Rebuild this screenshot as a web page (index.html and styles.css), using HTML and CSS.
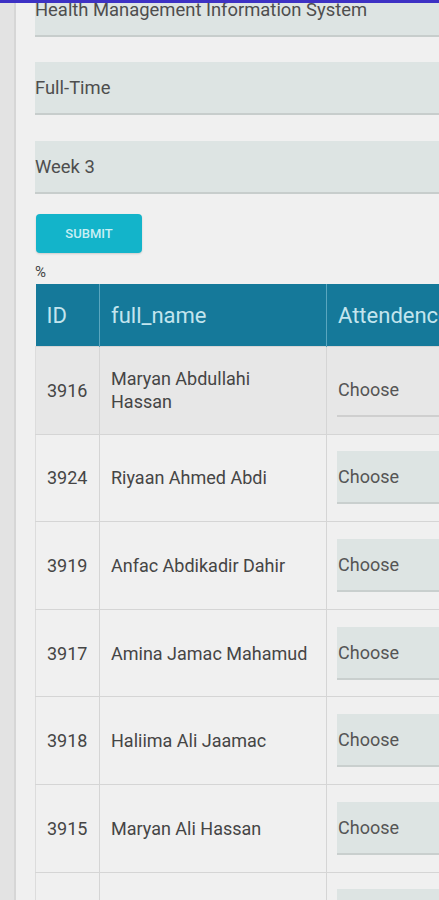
FILE: index.html
```html
<!DOCTYPE html>
<html>
<head>
<meta charset="utf-8">
<link rel="stylesheet" href="styles.css">
</head>
<body>
<div class="topline"></div>
<div class="page">
  <div class="rail"></div>
  <main class="content">
    <div class="field">Health Management Information System</div>
    <div class="field">Full-Time</div>
    <div class="field">Week 3</div>
    <button class="submit">SUBMIT</button>
    <div class="pct">%</div>
    <table class="grid">
      <colgroup><col class="c-id"><col class="c-name"><col class="c-att"></colgroup>
      <thead>
        <tr><th>ID</th><th>full_name</th><th>Attendence</th></tr>
      </thead>
      <tbody>
        <tr class="active"><td>3916</td><td>Maryan Abdullahi Hassan</td><td><div class="sel plain">Choose</div></td></tr>
        <tr><td>3924</td><td>Riyaan Ahmed Abdi</td><td><div class="sel">Choose</div></td></tr>
        <tr><td>3919</td><td>Anfac Abdikadir Dahir</td><td><div class="sel">Choose</div></td></tr>
        <tr><td>3917</td><td>Amina Jamac Mahamud</td><td><div class="sel">Choose</div></td></tr>
        <tr><td>3918</td><td>Haliima Ali Jaamac</td><td><div class="sel">Choose</div></td></tr>
        <tr><td>3915</td><td>Maryan Ali Hassan</td><td><div class="sel">Choose</div></td></tr>
        <tr><td>&nbsp;</td><td>&nbsp;</td><td><div class="sel"></div></td></tr>
      </tbody>
    </table>
  </main>
</div>
</body>
</html>
```
FILE: styles.css
```css
html, body {
  margin: 0;
  padding: 0;
  background: #f0f0f0;
  overflow: hidden;
  height: 900px;
}
body {
  font-family: Roboto, "Liberation Sans", sans-serif;
  color: #444;
}
.topline {
  position: fixed;
  top: 0;
  left: 0;
  right: 0;
  height: 3px;
  background: #3d31c4;
  z-index: 5;
}
.page {
  display: flex;
  align-items: flex-start;
}
.rail {
  flex: 0 0 14px;
  height: 900px;
  background: #e3e3e3;
  border-right: 2px solid #d6d6d6;
}
.content {
  flex: 0 0 auto;
  width: 640px;
  padding-left: 19px;
  margin-top: -16px;
}
.field {
  height: 51px;
  line-height: 51px;
  background: #dde4e3;
  border-bottom: 2px solid #c7cdcc;
  font-size: 18.4px;
  color: #4e4e4e;
  margin-bottom: 25px;
}
.field:nth-child(2) { margin-bottom: 26px; }
.field:nth-child(3) { margin-bottom: 20px; }
.submit {
  display: block;
  width: 106px;
  height: 39px;
  margin-left: 1px;
  border: none;
  border-radius: 4px;
  background: #13b4ca;
  color: #c9eff4;
  font-family: Roboto, "Liberation Sans", sans-serif;
  font-size: 13px;
  font-weight: 500;
  box-shadow: 0 1px 2px rgba(0,0,0,0.15);
  padding: 0;
}
.pct {
  font-size: 15px;
  height: 21px;
  line-height: 18px;
  padding-top: 10px;
  color: #444;
}
.grid {
  border-collapse: collapse;
  table-layout: fixed;
  width: 520px;
}
.c-id { width: 64px; }
.c-name { width: 227px; }
.c-att { width: 229px; }
.grid th {
  background: #15799a;
  color: #c3e5ee;
  font-weight: 400;
  font-size: 22px;
  text-align: left;
  height: 62px;
  padding: 0 11px;
  border-left: 1px solid #5aa6bf;
  white-space: nowrap;
  overflow: hidden;
}
.grid th:first-child { border-left: none; }
.grid td {
  height: 87.6px;
  padding: 0 11px;
  font-size: 18px;
  line-height: 23px;
  border: 1px solid #d5d5d5;
  color: #454545;
  box-sizing: border-box;
}
.grid td:first-child { border-left: 1px solid #dcdcdc; }
.grid tr.active td { background: #e7e7e7; }
.grid td:last-child { padding: 0 0 0 10px; }
.sel {
  height: 51px;
  line-height: 51px;
  background: #dde4e3;
  border-bottom: 2px solid #c9cfce;
  color: #555;
  font-size: 18px;
  padding-left: 1px;
}
.sel.plain {
  background: transparent;
  border-bottom-color: #cfcfcf;
}
```
